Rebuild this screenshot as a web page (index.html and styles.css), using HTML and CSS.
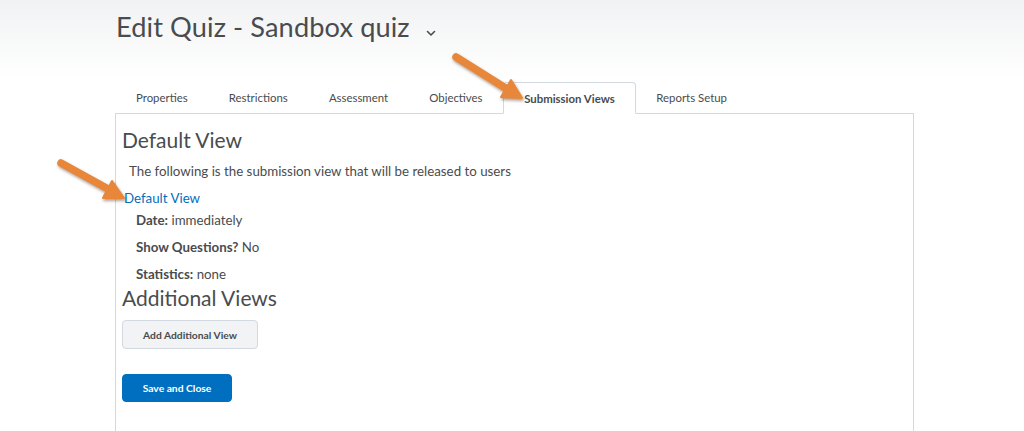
FILE: index.html
```html
<!DOCTYPE html>
<html lang="en">
<head>
<meta charset="utf-8">
<title>Edit Quiz - Sandbox quiz</title>
<link rel="stylesheet" href="styles.css">
</head>
<body>
<div class="page">
  <header class="header">
    <h1 class="title">Edit Quiz - Sandbox quiz</h1>
    <svg class="chevron" width="10" height="7" viewBox="0 0 10 7"><path d="M1.5 1.5 L5 5 L8.5 1.5" fill="none" stroke="#494c4e" stroke-width="1.6" stroke-linecap="round" stroke-linejoin="round"/></svg>
  </header>
  <nav class="tabs">
    <div class="tab">Properties</div>
    <div class="tab">Restrictions</div>
    <div class="tab">Assessment</div>
    <div class="tab">Objectives</div>
    <div class="tab active">Submission Views</div>
    <div class="tab">Reports Setup</div>
    <div class="tab-fill"></div>
  </nav>
  <main class="panel">
    <h2 class="h2 first">Default View</h2>
    <p class="intro">The following is the submission view that will be released to users</p>
    <a class="link" href="#">Default View</a>
    <p class="detail"><b>Date:</b> immediately</p>
    <p class="detail"><b>Show Questions?</b> No</p>
    <p class="detail"><b>Statistics:</b> none</p>
    <h2 class="h2 second">Additional Views</h2>
    <button class="btn">Add Additional View</button>
    <button class="btn primary">Save and Close</button>
  </main>
  <svg class="arrows" width="1024" height="431" viewBox="0 0 1024 431">
    <g class="arrow">
      <line x1="456" y1="57" x2="507" y2="89" stroke="#e8873a" stroke-width="7.5" stroke-linecap="round"/>
      <polygon points="522,98 501,97 511,80" fill="#e8873a" stroke="#e8873a" stroke-width="2" stroke-linejoin="round"/>
    </g>
    <g class="arrow">
      <line x1="61" y1="163" x2="110" y2="190" stroke="#e8873a" stroke-width="7.5" stroke-linecap="round"/>
      <polygon points="124,198 103,198 112,181" fill="#e8873a" stroke="#e8873a" stroke-width="2" stroke-linejoin="round"/>
    </g>
  </svg>
</div>
</body>
</html>
```

FILE: styles.css
```css
* { box-sizing: border-box; }
html, body {
  margin: 0;
  padding: 0;
  height: 100%;
}
body {
  font-family: Lato, "Open Sans", "Liberation Sans", sans-serif;
  color: #494c4e;
  background: linear-gradient(to bottom, #f1f2f3 0px, #ffffff 78px);
  overflow: hidden;
}
.page {
  position: relative;
  width: 1024px;
  height: 431px;
}
.header {
  display: flex;
  align-items: flex-start;
  padding: 10px 0 0 116px;
  height: 82px;
}
.title {
  margin: 0;
  font-size: 27.2px;
  font-weight: 400;
  line-height: 34px;
  letter-spacing: 0.1px;
}
.chevron {
  margin: 20px 0 0 16px;
}
.tabs {
  display: flex;
  margin-left: 115px;
  width: 799px;
  height: 32px;
}
.tab {
  padding: 0 20.6px;
  font-size: 11.4px;
  line-height: 31px;
  height: 32px;
  border-bottom: 1px solid #d3d9e3;
  white-space: nowrap;
}
.tab:first-child { padding-left: 21px; }
.tab.active {
  font-weight: 700;
  border: 1px solid #d3d9e3;
  border-bottom: 1px solid #ffffff;
  border-radius: 4px 4px 0 0;
  background: #fff;
  padding: 0 20px;
}
.tab-fill {
  flex: 1;
  border-bottom: 1px solid #d3d9e3;
}
.panel {
  margin-left: 115px;
  width: 799px;
  height: 320px;
  border-left: 1px solid #d3d9e3;
  border-right: 1px solid #d3d9e3;
  padding: 0 0 0 6px;
  display: flex;
  flex-direction: column;
  align-items: flex-start;
  background: #fff;
}
.h2 {
  margin: 0;
  font-size: 21px;
  font-weight: 400;
  line-height: 26px;
}
.h2.first { margin-top: 13px; }
.h2.second { margin-top: 1px; }
.intro {
  margin: 8px 0 0 7px;
  font-size: 13.3px;
  line-height: 20px;
}
.link {
  margin: 7px 0 0 2px;
  font-size: 13.3px;
  line-height: 20px;
  color: #006fbf;
  text-decoration: none;
}
.detail {
  margin: 2px 0 0 14px;
  font-size: 13.3px;
  line-height: 20px;
}
.detail + .detail { margin-top: 7px; }
.detail b { font-weight: 700; }
.btn {
  margin-top: 9px;
  width: 136px;
  height: 29px;
  font-family: inherit;
  font-size: 10.3px;
  font-weight: 700;
  color: #494c4e;
  background: #f1f3f5;
  border: 1px solid #d3d9e3;
  border-radius: 4px;
  padding: 0;
}
.btn.primary {
  margin-top: 25px;
  width: 110px;
  height: 28px;
  background: #006fbf;
  border-color: #006fbf;
  color: #fff;
}
.arrows {
  position: absolute;
  left: 0;
  top: 0;
  pointer-events: none;
}
.arrow {
  filter: drop-shadow(1px 2px 1.5px rgba(80, 40, 10, 0.45));
}
```
